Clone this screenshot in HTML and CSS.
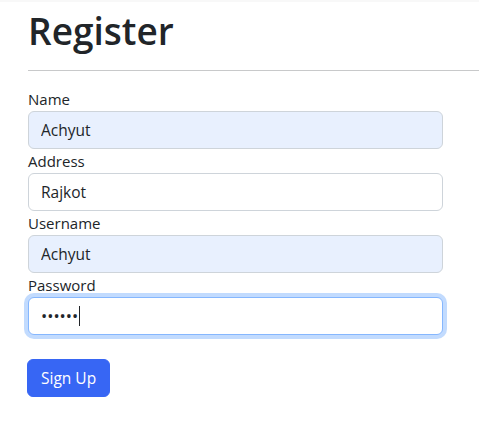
FILE: index.html
```html
<!DOCTYPE html>
<html lang="en">
<head>
<meta charset="utf-8">
<title>Register</title>
<link rel="stylesheet" href="styles.css">
</head>
<body>
<div class="topbar"></div>
<main class="page">
  <h1 class="title">Register</h1>
  <hr class="rule">
  <form class="form">
    <div class="group">
      <label class="label" for="name">Name</label>
      <input class="field autofill" id="name" type="text" value="Achyut">
    </div>
    <div class="group">
      <label class="label" for="address">Address</label>
      <input class="field" id="address" type="text" value="Rajkot">
    </div>
    <div class="group">
      <label class="label" for="username">Username</label>
      <input class="field autofill" id="username" type="text" value="Achyut">
    </div>
    <div class="group">
      <label class="label" for="password">Password</label>
      <div class="field focus"><span class="dots">••••••</span><span class="caret"></span></div>
    </div>
    <button class="btn" type="button">Sign Up</button>
  </form>
</main>
</body>
</html>
```
FILE: styles.css
```css
* { box-sizing: border-box; }
html, body { margin: 0; padding: 0; background: #fff; }
body {
  font-family: "Open Sans", "Noto Sans", sans-serif;
  color: #212529;
  font-size: 15px;
  line-height: 24px;
  overflow: hidden;
}
.topbar { height: 2px; background: #f8f8f8; }
.page { padding: 5px 0 0 28px; }
.title {
  margin: 0;
  font-size: 37px;
  font-weight: 600;
  line-height: 48px;
  letter-spacing: 0;
}
.rule {
  margin: 15px 0 16px;
  border: 0;
  border-top: 1px solid #c8c9ca;
}
.form { display: flex; flex-direction: column; align-items: flex-start; }
.group { display: flex; flex-direction: column; }
.label { display: block; line-height: 24px; }
.field {
  display: flex;
  align-items: center;
  width: 415px;
  height: 38px;
  padding: 0 12px;
  font: inherit;
  font-size: 15.5px;
  color: #212529;
  background: #fff;
  border: 1px solid #ced4da;
  border-radius: 6px;
  outline: none;
}
.autofill { background: #e8f0fe; }
.focus {
  border-color: #86b7fe;
  box-shadow: 0 0 0 4px rgba(13, 110, 253, .25);
}
.dots { font-size: 16.5px; letter-spacing: 0; }
.caret { width: 1px; height: 20px; background: #212529; margin-left: 1px; }
.btn {
  margin-top: 24px;
  margin-left: -1px;
  height: 38px;
  padding: 0 13px;
  font: inherit;
  font-size: 15.5px;
  color: #fff;
  background: #3766f4;
  border: 1px solid #3766f4;
  border-radius: 6px;
}
```
